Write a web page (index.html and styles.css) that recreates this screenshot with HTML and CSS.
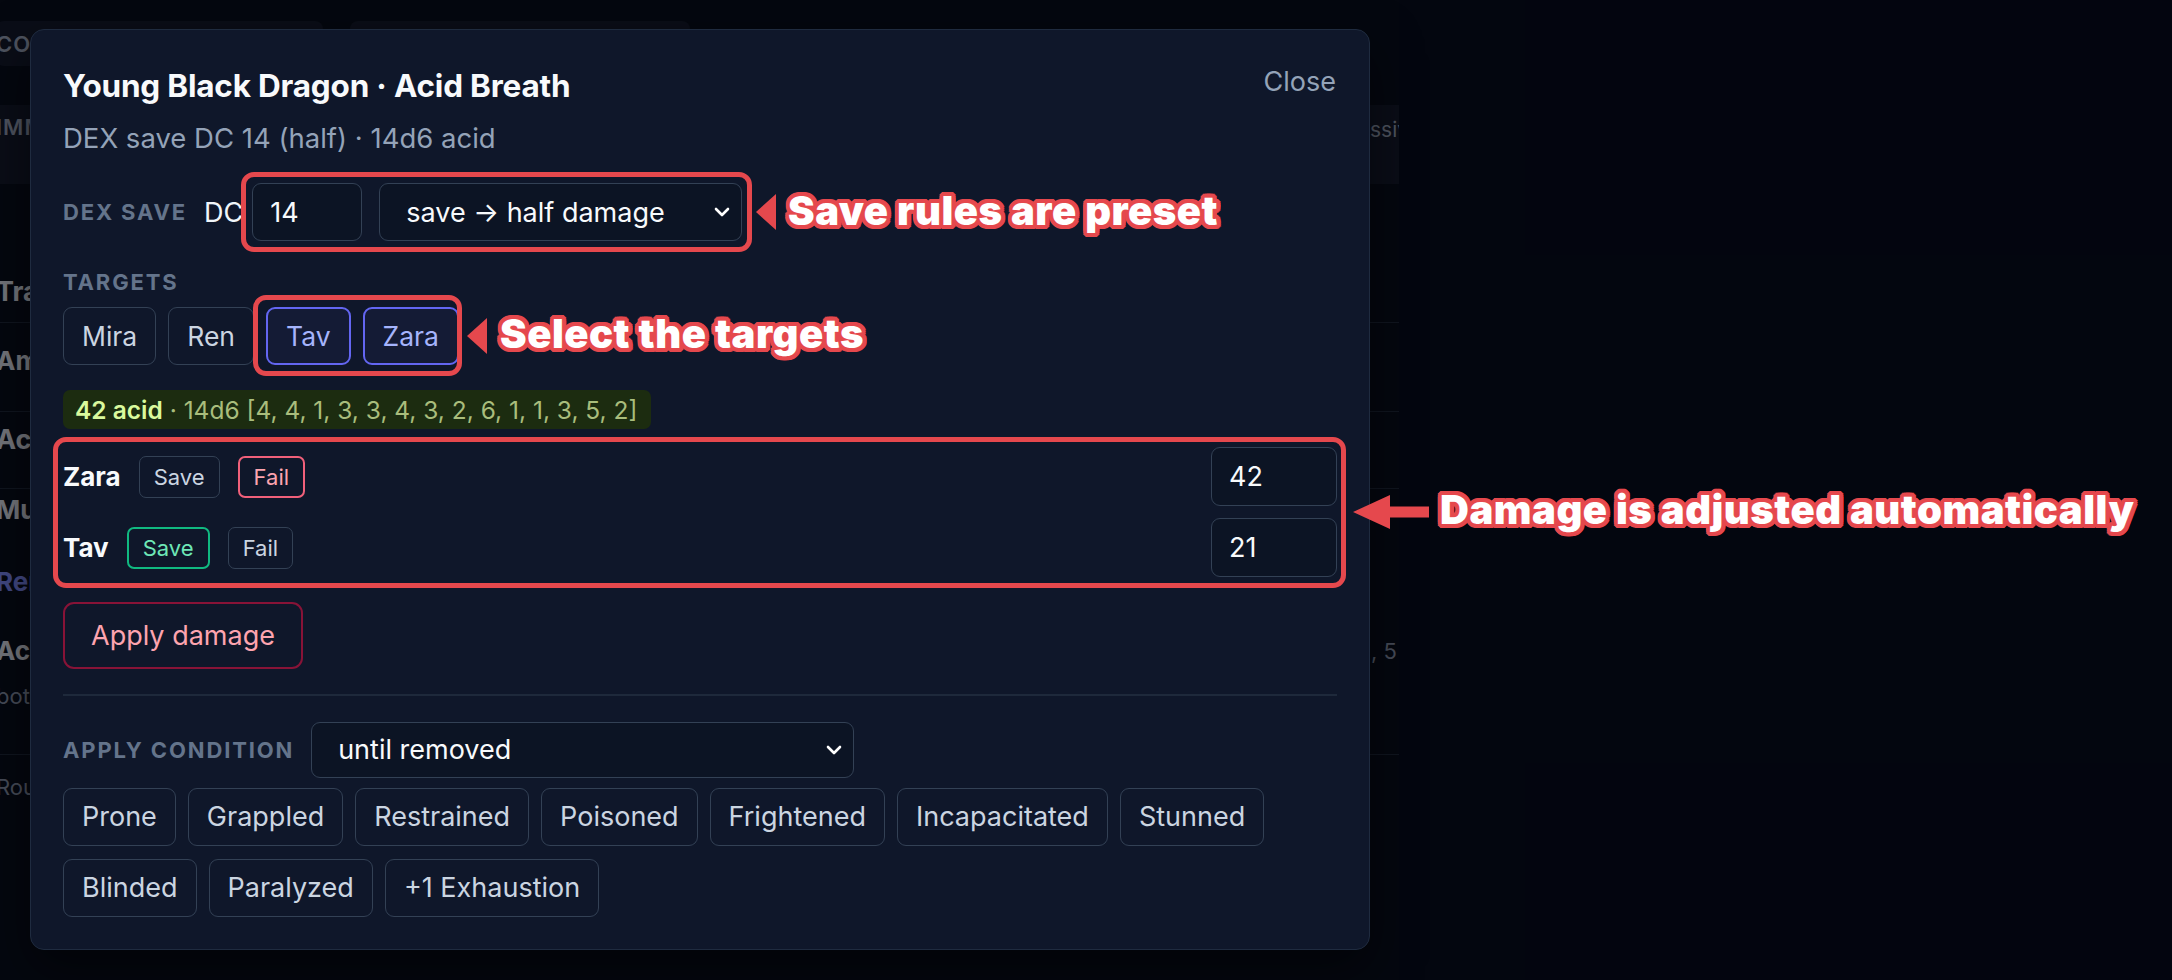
FILE: index.html
```html
<!DOCTYPE html>
<html lang="en">
<head>
    <meta charset="UTF-8">
    <title>Young Black Dragon · Acid Breath</title>
    <link rel="stylesheet" href="styles.css">
</head>
<body>
    <!-- encounter page behind the dialog -->
    <div class="app">
        <div class="tabs">
            <div class="tab">COMBAT</div>
            <div class="tab">NOTES</div>
        </div>
        <div class="band">
            <span>IMMUNITIES acid</span>
            <span class="band-end">ssive Perception 14</span>
        </div>
        <div class="sheet">
            <div class="row row-traits head">Traits</div>
            <div class="row row-amph"><b>Amphibious.</b></div>
            <div class="row row-actions head">Actions</div>
            <div class="row row-multi"><b>Multiattack.</b></div>
            <div class="row row-rend"><b class="link">Rend.</b></div>
            <div class="row row-acid">
                <div class="split">
                    <b>Acid Breath</b>
                    <span class="muted">n, 5 ft line</span>
                </div>
                <span class="muted second">both targets take acid damage</span>
            </div>
            <div class="row-foot">Round 2</div>
        </div>
    </div>

    <div class="backdrop"></div>

    <div class="modal">
        <div class="modal-head">
            <h2 class="modal-title">Young Black Dragon · Acid Breath</h2>
            <span class="close">Close</span>
        </div>
        <p class="modal-sub">DEX save DC 14 (half) · 14d6 acid</p>

        <div class="save-row">
            <span class="label">DEX SAVE</span>
            <span class="dc">DC</span>
            <div class="field dc-field">14</div>
            <div class="field select save-select">
                <span>save → half damage</span>
                <svg width="16" height="10" viewBox="0 0 16 10"><path d="M2 2 L8 8 L14 2" fill="none" stroke="#fff" stroke-width="2.6" stroke-linecap="round" stroke-linejoin="round"/></svg>
            </div>
        </div>

        <div class="label targets-label">TARGETS</div>
        <div class="chips targets">
            <span class="chip">Mira</span>
            <span class="chip">Ren</span>
            <span class="chip picked">Tav</span>
            <span class="chip picked">Zara</span>
        </div>

        <div class="roll"><b>42 acid</b> · 14d6 [4, 4, 1, 3, 3, 4, 3, 2, 6, 1, 1, 3, 5, 2]</div>

        <div class="hits">
            <div class="hit">
                <span class="who">Zara</span>
                <span class="mini">Save</span>
                <span class="mini fail">Fail</span>
                <div class="field dmg">42</div>
            </div>
            <div class="hit">
                <span class="who">Tav</span>
                <span class="mini save">Save</span>
                <span class="mini">Fail</span>
                <div class="field dmg">21</div>
            </div>
        </div>

        <button class="apply">Apply damage</button>

        <div class="divider"></div>

        <div class="cond-row">
            <span class="label">APPLY CONDITION</span>
            <div class="field select cond-select">
                <span>until removed</span>
                <svg width="16" height="10" viewBox="0 0 16 10"><path d="M2 2 L8 8 L14 2" fill="none" stroke="#fff" stroke-width="2.6" stroke-linecap="round" stroke-linejoin="round"/></svg>
            </div>
        </div>
        <div class="chips conditions">
            <span class="chip">Prone</span>
            <span class="chip">Grappled</span>
            <span class="chip">Restrained</span>
            <span class="chip">Poisoned</span>
            <span class="chip">Frightened</span>
            <span class="chip">Incapacitated</span>
            <span class="chip">Stunned</span>
            <span class="chip">Blinded</span>
            <span class="chip">Paralyzed</span>
            <span class="chip">+1 Exhaustion</span>
        </div>
    </div>

    <!-- tutorial callouts drawn over the dialog -->
    <div class="mark mark-save"></div>
    <div class="tip tip-save"></div>
    <div class="note note-save">Save rules are preset</div>

    <div class="mark mark-targets"></div>
    <div class="tip tip-targets"></div>
    <div class="note note-targets">Select the targets</div>

    <div class="mark mark-damage"></div>
    <svg class="arrow" width="76" height="36" viewBox="0 0 76 36">
        <path d="M0 18 L37 1 L37 12.5 L76 12.5 L76 23.5 L37 23.5 L37 35 Z" fill="#e5484d"/>
    </svg>
    <div class="note note-damage">Damage is adjusted automatically</div>
</body>
</html>
```

FILE: styles.css
```css
body {
    margin: 0;
    width: 2172px;
    height: 980px;
    overflow: hidden;
    position: relative;
    background: #050812;
    font-family: 'Inter', 'Noto Sans', sans-serif;
    color: #e2e8f0;
}

/* ---- page behind ---- */
.app {
    width: 1403px;
    height: 980px;
    margin-left: -4px;
    padding-top: 21px;
    box-sizing: border-box;
    overflow: hidden;
    background: #070a13;
}

.tabs {
    display: flex;
    gap: 27px;
}

.tab {
    height: 45px;
    width: 327px;
    background: #121722;
    border-radius: 8px;
    color: #9aa3b2;
    font-size: 22px;
    font-weight: 600;
    letter-spacing: 1px;
    display: flex;
    align-items: center;
}

.tab + .tab {
    width: 340px;
}

.band {
    margin-top: 39px;
    height: 79px;
    background: #121722;
    display: grid;
    grid-template-columns: 1374px auto;
    align-items: start;
    padding-top: 9px;
    box-sizing: border-box;
    color: #9aa3b2;
    font-size: 22px;
    font-weight: 600;
    letter-spacing: 1px;
    white-space: nowrap;
    overflow: hidden;
}

.band-end {
    font-weight: 400;
    letter-spacing: 0;
    font-size: 21px;
    line-height: 32px;
}

.sheet {
    padding-top: 90px;
    color: #e5e7eb;
}

.row {
    box-sizing: border-box;
    font-size: 26px;
    line-height: 36px;
}

.head {
    font-size: 27px;
    font-weight: 700;
}

.row-traits { height: 49px; border-bottom: 1.5px solid #1f2633; }
.row-amph { height: 89px; padding-top: 20px; border-bottom: 1.5px solid #1f2633; }
.row-actions { height: 77px; padding-top: 10px; border-bottom: 1.5px solid #1f2633; }
.row-multi { height: 57px; padding-top: 3px; }
.row-rend { height: 72px; padding-top: 18px; }
.row-acid { height: 137px; padding-top: 15px; border-bottom: 1.5px solid #1f2633; }

.link {
    color: #818cf8;
}

.split {
    display: grid;
    grid-template-columns: 1362px auto;
    white-space: nowrap;
}

.muted {
    font-size: 22px;
    color: #8a93a3;
    white-space: nowrap;
}

.second {
    display: block;
    margin-top: 12px;
    line-height: 30px;
}

.row-foot {
    font-size: 22px;
    line-height: 30px;
    color: #8a93a3;
    padding-top: 17px;
}

.backdrop {
    position: absolute;
    inset: 0;
    background: rgba(1, 3, 12, 0.5);
}

/* ---- dialog ---- */
.modal {
    position: absolute;
    left: 30px;
    top: 29px;
    width: 1340px;
    box-sizing: border-box;
    padding: 36px 32px 32px;
    background: #0f172a;
    border: 1px solid #1f2b3f;
    border-radius: 14px;
    box-shadow: 0 20px 50px rgba(0,0,0,0.5);
}

.modal-head {
    display: flex;
    justify-content: space-between;
    align-items: flex-start;
}

.modal-title {
    margin: 0;
    font-size: 31.5px;
    line-height: 40px;
    font-weight: 700;
    color: #f8fafc;
    letter-spacing: -0.2px;
}

.close {
    font-size: 27px;
    line-height: 32px;
    color: #94a3b8;
    margin-right: 1px;
}

.modal-sub {
    margin: 14px 0 0;
    font-size: 27.5px;
    line-height: 36px;
    color: #94a3b8;
}

.label {
    font-size: 22px;
    line-height: 28px;
    font-weight: 700;
    letter-spacing: 1.85px;
    color: #64748b;
}

.save-row {
    display: flex;
    align-items: center;
    margin-top: 27px;
}

.dc {
    font-size: 27px;
    color: #f1f5f9;
    margin-left: 17px;
}

.field {
    box-sizing: border-box;
    height: 58px;
    border: 1.5px solid #334155;
    border-radius: 9px;
    background: #0c1424;
    display: flex;
    align-items: center;
    font-size: 27px;
    color: #f8fafc;
}

.dc-field {
    width: 110px;
    padding-left: 17px;
    margin-left: 9px;
}

.select {
    justify-content: space-between;
    padding: 0 11px 0 26px;
}

.save-select {
    width: 363px;
    margin-left: 17px;
}

.targets-label {
    margin-top: 27px;
}

.chips {
    display: flex;
    flex-wrap: wrap;
    gap: 13px;
    margin-top: 11px;
}

.chip {
    box-sizing: border-box;
    height: 58px;
    padding: 0 18px;
    border: 1.5px solid #334155;
    border-radius: 9px;
    background: #0f172a;
    display: flex;
    align-items: center;
    font-size: 27px;
    color: #cbd5e1;
}

.targets {
    gap: 12px;
}

.targets .chip {
    font-size: 26.5px;
}

.chip.picked {
    border: 2px solid #6366f1;
    color: #a5b4fc;
    background: rgba(99, 102, 241, 0.06);
}

.roll {
    display: inline-flex;
    align-items: center;
    height: 39px;
    margin-top: 25px;
    padding: 0 14px 0 12px;
    border-radius: 7px;
    background: #1c2c10;
    font-size: 24.5px;
    color: #a9bd7c;
    white-space: pre;
}

.roll b {
    color: #d9f99d;
    font-weight: 600;
}

.hits {
    display: flex;
    flex-direction: column;
    gap: 12px;
    margin-top: 18px;
}

.hit {
    display: flex;
    align-items: center;
    gap: 18px;
}

.who {
    font-size: 26px;
    font-weight: 700;
    color: #f8fafc;
}

.mini {
    box-sizing: border-box;
    height: 42px;
    padding: 0 14px;
    border: 1.5px solid #334155;
    border-radius: 7px;
    display: flex;
    align-items: center;
    font-size: 22px;
    color: #cbd5e1;
}

.mini.fail {
    border: 2px solid #f0607a;
    color: #fda4af;
}

.mini.save {
    border: 2px solid #10b981;
    color: #6ee7b7;
}

.dmg {
    width: 126px;
    height: 59px;
    padding-left: 17px;
    margin-left: auto;
}

.apply {
    display: block;
    margin-top: 25px;
    height: 67px;
    padding: 0 26px;
    border: 2px solid #881337;
    border-radius: 11px;
    background: transparent;
    font-family: inherit;
    font-size: 27px;
    color: #fda4af;
}

.divider {
    margin-top: 25px;
    height: 1.5px;
    background: #1e293b;
}

.cond-row {
    display: flex;
    align-items: center;
    gap: 17px;
    margin-top: 26px;
}

.cond-select {
    width: 543px;
    height: 56px;
}

.conditions {
    margin-top: 10px;
    gap: 13px 12px;
}

/* ---- callouts ---- */
.mark {
    position: absolute;
    box-sizing: border-box;
    border: 5px solid #e5484d;
    border-radius: 13px;
}

.mark-save { left: 241px; top: 172px; width: 511px; height: 80px; }
.mark-targets { left: 253px; top: 295px; width: 209px; height: 81px; }
.mark-damage { left: 53px; top: 437px; width: 1293px; height: 151px; }

.tip {
    position: absolute;
    width: 0;
    height: 0;
    border-top: 18px solid transparent;
    border-bottom: 18px solid transparent;
    border-right: 20px solid #e5484d;
}

.tip-save { left: 756px; top: 194px; }
.tip-targets { left: 467px; top: 318px; }

.arrow {
    position: absolute;
    left: 1353px;
    top: 494px;
}

.note {
    position: absolute;
    font-size: 40px;
    line-height: 46px;
    font-weight: 900;
    letter-spacing: 0.5px;
    color: #fff;
    white-space: nowrap;
    text-shadow:
        4px 0 0 #e5484d, -4px 0 0 #e5484d, 0 4px 0 #e5484d, 0 -4px 0 #e5484d,
        3px 3px 0 #e5484d, -3px 3px 0 #e5484d, 3px -3px 0 #e5484d, -3px -3px 0 #e5484d,
        4px 2px 0 #e5484d, -4px 2px 0 #e5484d, 4px -2px 0 #e5484d, -4px -2px 0 #e5484d,
        2px 4px 0 #e5484d, -2px 4px 0 #e5484d, 2px -4px 0 #e5484d, -2px -4px 0 #e5484d;
}

.note-save { left: 788px; top: 188px; }
.note-targets { left: 500px; top: 311px; }
.note-damage { left: 1440px; top: 487px; }
```
